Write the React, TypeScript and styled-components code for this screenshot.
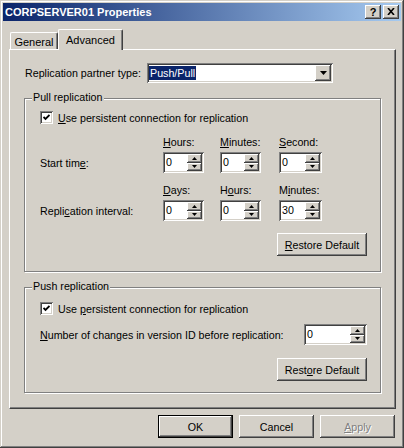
import React from 'react'
import styled, { createGlobalStyle } from 'styled-components'

const GlobalStyle = createGlobalStyle`
  html, body {
    margin: 0;
    padding: 0;
    background: #d4d0c8;
  }
  body {
    font-family: "Liberation Sans", Arial, sans-serif;
    font-size: 10.7px;
    color: #000;
  }
`

const raised = `
  box-shadow: inset -1px -1px #404040, inset 1px 1px #fff,
    inset -2px -2px #808080, inset 2px 2px #d4d0c8;
`
const sunken = `
  box-shadow: inset 1px 1px #808080, inset -1px -1px #fff,
    inset 2px 2px #404040, inset -2px -2px #d4d0c8;
`

const Window = styled.div`
  width: 404px;
  height: 448px;
  box-sizing: border-box;
  padding: 3px;
  background: #d4d0c8;
  box-shadow: inset -1px -1px #404040, inset 1px 1px #d4d0c8,
    inset -2px -2px #808080, inset 2px 2px #fff;
  display: flex;
  flex-direction: column;
`

const TitleBar = styled.div`
  height: 18px;
  flex: none;
  display: flex;
  align-items: center;
  justify-content: space-between;
  padding: 0 2px 0 2px;
  background: linear-gradient(to right, #0a246a, #a6caf0);
`

const Title = styled.span`
  color: #fff;
  font-weight: bold;
  font-size: 11px;
`

const TitleButtons = styled.div`
  display: flex;
  gap: 2px;
`

const TitleButton = styled.div`
  width: 16px;
  height: 14px;
  box-sizing: border-box;
  background: #d4d0c8;
  ${raised}
  display: flex;
  align-items: center;
  justify-content: center;
  font-weight: bold;
  font-size: 11px;
  line-height: 14px;
  padding-bottom: 1px;
`

const Body = styled.div`
  flex: 1;
  display: flex;
  flex-direction: column;
  padding: 8px 5px 0 6px;
`

const TabStrip = styled.div`
  height: 20px;
  display: flex;
  align-items: flex-end;
  padding-left: 1px;
  position: relative;
  z-index: 1;
`

const Tab = styled.div<{ $active?: boolean; $w: number }>`
  width: ${p => p.$w}px;
  height: ${p => (p.$active ? 21 : 17)}px;
  margin-bottom: ${p => (p.$active ? -1 : 0)}px;
  box-sizing: border-box;
  background: #d4d0c8;
  border-top: 1px solid #fff;
  border-left: 1px solid #fff;
  border-right: 1px solid #404040;
  border-radius: 2px 2px 0 0;
  box-shadow: inset -1px 0 #808080;
  display: flex;
  justify-content: center;
  align-items: center;
  padding-top: ${p => (p.$active ? 0 : 2)}px;
  font-size: 11px;
`

const Panel = styled.div`
  height: 360px;
  box-sizing: border-box;
  border-top: 1px solid #fff;
  border-left: 1px solid #fff;
  border-right: 1px solid #404040;
  border-bottom: 1px solid #404040;
  box-shadow: inset -1px -1px #808080;
  padding-top: 13px;
`

const PartnerRow = styled.div`
  display: flex;
  align-items: center;
  height: 20px;
  padding-left: 15px;
`

const PartnerLabel = styled.span`
  width: 122px;
`

const Combo = styled.div`
  width: 186px;
  height: 20px;
  box-sizing: border-box;
  padding: 2px;
  background: #fff;
  ${sunken}
  display: flex;
  justify-content: space-between;
`

const Selected = styled.span`
  margin: 1px 0;
  padding: 0 1px;
  background: #0a246a;
  color: #fff;
  line-height: 14px;
`

const DropButton = styled.div`
  width: 16px;
  box-sizing: border-box;
  background: #d4d0c8;
  ${raised}
  display: flex;
  align-items: center;
  justify-content: center;
`

const Group = styled.div<{ $top: number; $bottom: number }>`
  position: relative;
  margin: 15px 0 0 14px;
  width: 357px;
  box-sizing: border-box;
  border: 1px solid #808080;
  box-shadow: inset 1px 1px #fff, 1px 1px #fff;
  padding: ${p => p.$top}px 13px ${p => p.$bottom}px 15px;
`

const Caption = styled.span`
  position: absolute;
  top: -8px;
  left: 7px;
  padding: 0 1px;
  line-height: 13px;
  background: #d4d0c8;
`

const CheckRow = styled.div`
  display: flex;
  align-items: center;
  gap: 5px;
  height: 13px;
`

const CheckBox = styled.div`
  width: 13px;
  height: 13px;
  box-sizing: border-box;
  background: #fff;
  ${sunken}
  display: flex;
  align-items: center;
  justify-content: center;
`

const TimeGrid = styled.div`
  margin-top: 11px;
  display: grid;
  grid-template-columns: 123px 57px 59px 43px;
  grid-template-rows: 17px 21px 27px 21px;
`

const Head = styled.span`
  align-self: end;
  line-height: 13px;
  margin-bottom: 3px;
`

const RowLabel = styled.span`
  align-self: center;
`

const Spin = styled.div<{ $w: number }>`
  width: ${p => p.$w}px;
  height: 21px;
  box-sizing: border-box;
  padding: 2px;
  background: #fff;
  ${sunken}
  display: flex;
`

const SpinValue = styled.span`
  flex: 1;
  padding-left: 1px;
  line-height: 17px;
`

const SpinButtons = styled.div`
  width: 15px;
  display: flex;
  flex-direction: column;
`

const SpinButton = styled.div`
  flex: 1;
  background: #d4d0c8;
  ${raised}
  display: flex;
  align-items: center;
  justify-content: center;
`

const ActionRow = styled.div<{ $top: number }>`
  display: flex;
  justify-content: flex-end;
  margin-top: ${p => p.$top}px;
`

const NumberRow = styled.div`
  margin-top: 9px;
  display: flex;
  align-items: center;
  justify-content: space-between;
`

const Button = styled.button<{ $w?: number; $default?: boolean }>`
  width: ${p => p.$w ?? 75}px;
  height: 23px;
  box-sizing: border-box;
  margin: 0;
  padding: 0;
  font-family: inherit;
  font-size: inherit;
  color: #000;
  background: #d4d0c8;
  border: ${p => (p.$default ? '1px solid #000' : 'none')};
  ${raised}
  &:disabled {
    color: #808080;
    text-shadow: 1px 1px #fff;
  }
`

const ButtonRow = styled.div`
  display: flex;
  justify-content: flex-end;
  gap: 6px;
  margin-top: 6px;
  padding-right: 1px;
`

const Arrow = ({ up }: { up?: boolean }) => (
  <svg width="5" height="3" viewBox="0 0 5 3">
    <polygon points={up ? '2.5,0 5,3 0,3' : '0,0 5,0 2.5,3'} fill="#000" />
  </svg>
)

const SpinBox = ({ value, w = 41 }: { value: string; w?: number }) => (
  <Spin $w={w}>
    <SpinValue>{value}</SpinValue>
    <SpinButtons>
      <SpinButton>
        <Arrow up />
      </SpinButton>
      <SpinButton>
        <Arrow />
      </SpinButton>
    </SpinButtons>
  </Spin>
)

const Check = ({ children }: { children: React.ReactNode }) => (
  <CheckRow>
    <CheckBox>
      <svg width="7" height="7" viewBox="0 0 7 7">
        <path d="M0.5 3 L2.5 5 L6.5 1" stroke="#000" strokeWidth="1.8" fill="none" />
      </svg>
    </CheckBox>
    <span>{children}</span>
  </CheckRow>
)

export default function App() {
  return (
    <>
      <GlobalStyle />
      <Window>
        <TitleBar>
          <Title>CORPSERVER01 Properties</Title>
          <TitleButtons>
            <TitleButton>?</TitleButton>
            <TitleButton>
              <svg width="8" height="7" viewBox="0 0 8 7">
                <path d="M1 0 L7 7 M7 0 L1 7" stroke="#000" strokeWidth="1.6" />
              </svg>
            </TitleButton>
          </TitleButtons>
        </TitleBar>

        <Body>
          <TabStrip>
            <Tab $w={48}>General</Tab>
            <Tab $w={65} $active>
              Advanced
            </Tab>
          </TabStrip>

          <Panel>
            <PartnerRow>
              <PartnerLabel>Replication partner type:</PartnerLabel>
              <Combo>
                <Selected>Push/Pull</Selected>
                <DropButton>
                  <svg width="7" height="4" viewBox="0 0 7 4">
                    <polygon points="0,0 7,0 3.5,4" fill="#000" />
                  </svg>
                </DropButton>
              </Combo>
            </PartnerRow>

            <Group $top={12} $bottom={15}>
              <Caption>Pull replication</Caption>
              <Check>
                <u>U</u>se persistent connection for replication
              </Check>
              <TimeGrid>
                <span />
                <Head>
                  <u>H</u>ours:
                </Head>
                <Head>
                  <u>M</u>inutes:
                </Head>
                <Head>
                  <u>S</u>econd:
                </Head>
                <RowLabel>
                  Start tim<u>e</u>:
                </RowLabel>
                <SpinBox value="0" />
                <SpinBox value="0" />
                <SpinBox value="0" w={43} />
                <span />
                <Head>
                  <u>D</u>ays:
                </Head>
                <Head>
                  H<u>o</u>urs:
                </Head>
                <Head>
                  M<u>i</u>nutes:
                </Head>
                <RowLabel>
                  Repli<u>c</u>ation interval:
                </RowLabel>
                <SpinBox value="0" />
                <SpinBox value="0" />
                <SpinBox value="30" w={43} />
              </TimeGrid>
              <ActionRow $top={12}>
                <Button $w={90}>
                  <u>R</u>estore Default
                </Button>
              </ActionRow>
            </Group>

            <Group $top={14} $bottom={11}>
              <Caption>Push replication</Caption>
              <Check>
                Use <u>p</u>ersistent connection for replication
              </Check>
              <NumberRow>
                <span>
                  <u>N</u>umber of changes in version ID before replication:
                </span>
                <SpinBox value="0" w={63} />
              </NumberRow>
              <ActionRow $top={13}>
                <Button $w={90}>
                  Rest<u>o</u>re Default
                </Button>
              </ActionRow>
            </Group>
          </Panel>

          <ButtonRow>
            <Button $default>OK</Button>
            <Button>Cancel</Button>
            <Button disabled>
              <u>A</u>pply
            </Button>
          </ButtonRow>
        </Body>
      </Window>
    </>
  )
}
